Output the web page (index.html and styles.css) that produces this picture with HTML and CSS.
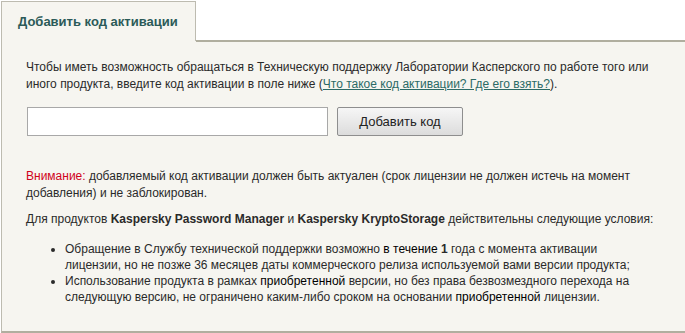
FILE: index.html
```html
<!DOCTYPE html>
<html lang="ru">
<head>
    <meta charset="UTF-8">
    <title>Добавить код активации</title>
    <link rel="stylesheet" href="styles.css">
</head>
<body>
    <div class="tabs">
        <div class="tab">Добавить код активации</div>
        <div class="tab-rest"></div>
    </div>
    <div class="panel">
        <p>Чтобы иметь возможность обращаться в Техническую поддержку Лаборатории Касперского по работе того или иного продукта, введите код активации в поле ниже (<a href="#">Что такое код активации? Где его взять?</a>).</p>

        <form class="code-form" onsubmit="return false;">
            <input type="text" class="code-input">
            <button type="submit" class="btn">Добавить код</button>
        </form>

        <p><span class="warn">Внимание:</span> добавляемый код активации должен быть актуален (срок лицензии не должен истечь на момент добавления) и не заблокирован.</p>

        <p>Для продуктов <b>Kaspersky Password Manager</b> и <b>Kaspersky KryptoStorage</b> действительны следующие условия:</p>

        <ul>
            <li>Обращение в Службу технической поддержки возможно <span class="dark">в течение</span> <b>1</b> года с момента активации лицензии, но не позже 36 месяцев даты коммерческого релиза используемой вами версии продукта;</li>
            <li>Использование продукта в рамках <span class="dark">приобретенной</span> версии, но без права безвозмездного перехода на следующую версию, не ограничено каким-либо сроком на основании <span class="dark">приобретенной</span> лицензии.</li>
        </ul>
    </div>
</body>
</html>
```

FILE: styles.css
```css
body {
    margin: 0;
    padding: 0;
    background: #fff;
    font-family: 'Liberation Sans', Arial, sans-serif;
    font-size: 12px;
    color: #2a2a2a;
    overflow: hidden;
}

.tabs {
    display: flex;
    height: 41px;
    margin-left: 1px;
}

.tab {
    width: 195px;
    box-sizing: border-box;
    padding-left: 16px;
    line-height: 39px;
    margin-top: 1px;
    white-space: nowrap;
    border: 1px solid #bdbbb0;
    border-bottom: none;
    background: #f6f5f0;
    color: #2b5a58;
    font-size: 13px;
    font-weight: bold;
}

.tab-rest {
    flex: 1;
    border-bottom: 2px solid #b0ae9f;
    margin-bottom: -1px;
}

.panel {
    margin-left: 1px;
    width: 700px;
    height: 292px;
    background: #f6f5f0;
    border: 1px solid #bdbbb0;
    border-top: none;
    border-bottom: 2px solid #b0ae9f;
    padding: 18px 0 0 24px;
    box-sizing: border-box;
}

p {
    margin: 0 0 9px;
    width: 650px;
    line-height: 17px;
}

a {
    color: #2b6a66;
}

.warn {
    color: #d0021b;
}

.dark {
    color: #000;
}

.code-form {
    display: flex;
    gap: 9px;
    margin: 14px 0 32px 1px;
}

.code-input {
    width: 301px;
    height: 29px;
    box-sizing: border-box;
    border: 1px solid #a8a8a8;
    background: #fff;
}

.btn {
    width: 126px;
    height: 29px;
    border: 1px solid #8e8e8e;
    border-radius: 2px;
    background: linear-gradient(#f6f6f6, #dcdcdc);
    font-family: 'Liberation Sans', Arial, sans-serif;
    font-size: 13px;
    color: #222;
}

ul {
    margin: 13px 0 0;
    padding-left: 39px;
    width: 591px;
    line-height: 16px;
}
```
